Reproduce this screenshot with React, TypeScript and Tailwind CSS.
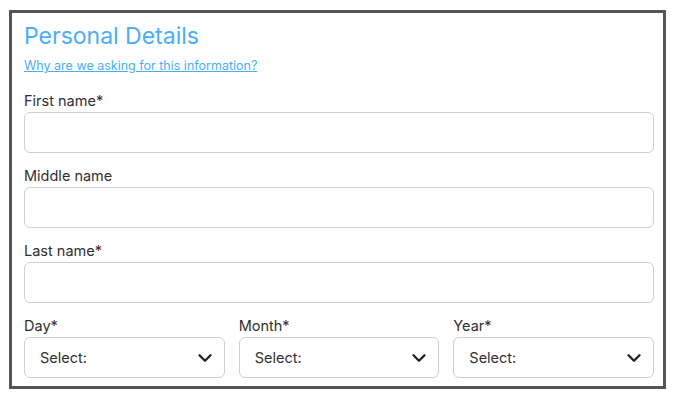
import { ChevronDown } from 'lucide-react';

const font = { fontFamily: '"Inter", "Open Sans", sans-serif' };

function Label({ text, required }: { text: string; required?: boolean }) {
    return (
        <label className="block text-[14.5px] leading-[18px] text-[#2f2f2f]">
            {text}
            {required && <span className="text-[#4a2a26]">*</span>}
        </label>
    );
}

function TextField({ label, required }: { label: string; required?: boolean }) {
    return (
        <div className="flex flex-col gap-[2px]">
            <Label text={label} required={required} />
            <input className="h-[41px] w-full rounded-[6px] border border-[#cfcfcf] bg-white px-3" />
        </div>
    );
}

function SelectField({ label }: { label: string }) {
    return (
        <div className="flex flex-1 flex-col gap-[2px]">
            <Label text={label} required />
            <div className="flex h-[41px] items-center justify-between rounded-[6px] border border-[#cfcfcf] bg-white pl-[15px] pr-[8px]">
                <span className="text-[14.5px] text-[#2f2f2f]">Select:</span>
                <ChevronDown size={22} strokeWidth={2.6} className="text-[#222]" />
            </div>
        </div>
    );
}

export default function App() {
    return (
        <div className="min-h-screen bg-white pl-[9px] pt-[10px]" style={font}>
            <div className="w-[657px] border-[3px] border-[#555] pb-[8px] pl-3 pr-[9px] pt-[9px]">
                <h1 className="text-[23px] leading-[28px] text-[#49aefc]">Personal Details</h1>
                <a href="#" className="mt-[8px] block text-[12.5px] leading-[16px] text-[#49aefc] underline">
                    Why are we asking for this information?
                </a>
                <div className="mt-[18px] flex flex-col gap-[14px]">
                    <TextField label="First name" required />
                    <TextField label="Middle name" />
                    <TextField label="Last name" required />
                    <div className="flex gap-[14px]">
                        <SelectField label="Day" />
                        <SelectField label="Month" />
                        <SelectField label="Year" />
                    </div>
                </div>
            </div>
        </div>
    );
}
